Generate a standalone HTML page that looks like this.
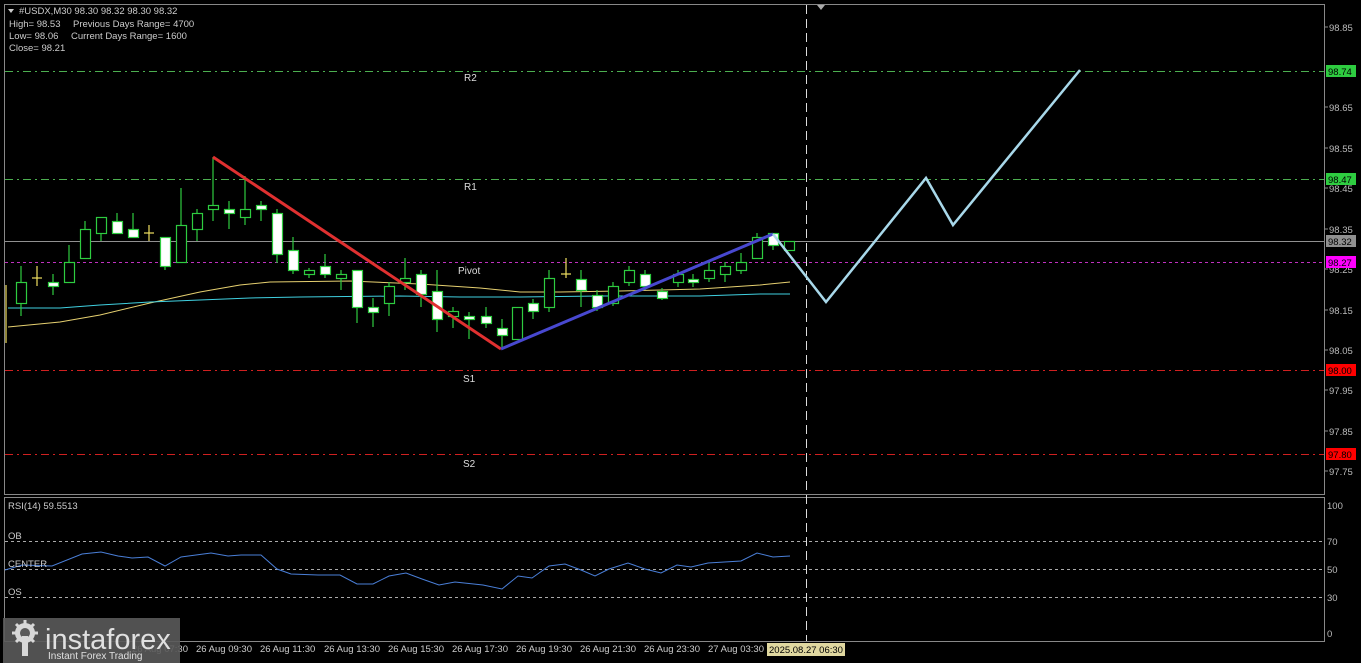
<!DOCTYPE html>
<html><head><meta charset="utf-8"><style>
html,body{margin:0;padding:0;background:#000;width:1361px;height:663px;overflow:hidden}
svg{display:block;font-family:"Liberation Sans",sans-serif}
</style></head><body>
<svg width="1361" height="663" viewBox="0 0 1361 663" xmlns="http://www.w3.org/2000/svg">
<rect width="1361" height="663" fill="#000"/>
<!-- frames -->
<rect x="4.5" y="4.5" width="1320" height="490" fill="none" stroke="#888" stroke-width="1"/>
<rect x="4.5" y="497.5" width="1320" height="144" fill="none" stroke="#888" stroke-width="1"/>
<!-- horizontal levels -->
<g stroke-width="1" fill="none">
<line x1="5" y1="71.5" x2="1324" y2="71.5" stroke="#4caf50" stroke-dasharray="8,4,2,4"/>
<line x1="5" y1="179.5" x2="1324" y2="179.5" stroke="#4caf50" stroke-dasharray="8,4,2,4"/>
<line x1="5" y1="241.5" x2="1324" y2="241.5" stroke="#909090"/>
<line x1="5" y1="262.5" x2="1324" y2="262.5" stroke="#c030c0" stroke-dasharray="3,3"/>
<line x1="5" y1="370.5" x2="1324" y2="370.5" stroke="#d02020" stroke-dasharray="8,4,2,4"/>
<line x1="5" y1="454.5" x2="1324" y2="454.5" stroke="#d02020" stroke-dasharray="8,4,2,4"/>
<line x1="5" y1="541.5" x2="1324" y2="541.5" stroke="#aaa" stroke-dasharray="3,3"/>
<line x1="5" y1="569.5" x2="1324" y2="569.5" stroke="#aaa" stroke-dasharray="3,3"/>
<line x1="5" y1="597.5" x2="1324" y2="597.5" stroke="#aaa" stroke-dasharray="3,3"/>
<line x1="806.5" y1="5" x2="806.5" y2="641" stroke="#ddd" stroke-dasharray="9,5"/>
</g>
<polygon points="817,5 825,5 821,10" fill="#aaa"/>
<!-- MAs -->
<polyline fill="none" stroke="#e6d070" stroke-width="1" points="8,327 60,322 100,315 150,303 200,292 240,285 270,282 350,281 420,284 480,288 520,292 560,292 620,291 700,289 760,285 790,282"/>
<polyline fill="none" stroke="#40d0e0" stroke-width="1" points="8,308 60,308 100,305 150,302 200,300 250,298 300,297 400,296 460,297 520,297 600,296 700,296 760,294 790,294"/>
<!-- candles -->
<g stroke="#2ecc40" stroke-width="1.2" id="c"></g>
<g stroke="#2ecc40" stroke-width="1.2">
<line x1="21" y1="266" x2="21" y2="316"/><rect x="16.5" y="282.5" width="10" height="21" fill="#000"/>
<line x1="53" y1="274" x2="53" y2="295"/><rect x="48.5" y="282.5" width="10" height="4" fill="#fff"/>
<line x1="69" y1="245" x2="69" y2="282"/><rect x="64.5" y="262.5" width="10" height="20" fill="#000"/>
<line x1="85" y1="221" x2="85" y2="258"/><rect x="80.5" y="229.5" width="10" height="29" fill="#000"/>
<line x1="101" y1="217" x2="101" y2="241"/><rect x="96.5" y="217.5" width="10" height="16" fill="#000"/>
<line x1="117" y1="213" x2="117" y2="233"/><rect x="112.5" y="221.5" width="10" height="12" fill="#fff"/>
<line x1="133" y1="213" x2="133" y2="237"/><rect x="128.5" y="229.5" width="10" height="8" fill="#fff"/>
<line x1="165" y1="237" x2="165" y2="270"/><rect x="160.5" y="237.5" width="10" height="29" fill="#fff"/>
<line x1="181" y1="188" x2="181" y2="262"/><rect x="176.5" y="225.5" width="10" height="37" fill="#000"/>
<line x1="197" y1="209" x2="197" y2="241"/><rect x="192.5" y="213.5" width="10" height="16" fill="#000"/>
<line x1="213" y1="157" x2="213" y2="221"/><rect x="208.5" y="205.5" width="10" height="4" fill="#000"/>
<line x1="229" y1="201" x2="229" y2="229"/><rect x="224.5" y="209.5" width="10" height="4" fill="#fff"/>
<line x1="245" y1="176" x2="245" y2="225"/><rect x="240.5" y="209.5" width="10" height="8" fill="#000"/>
<line x1="261" y1="201" x2="261" y2="221"/><rect x="256.5" y="205.5" width="10" height="4" fill="#fff"/>
<line x1="277" y1="209" x2="277" y2="263"/><rect x="272.5" y="213.5" width="10" height="41" fill="#fff"/>
<line x1="293" y1="237" x2="293" y2="274"/><rect x="288.5" y="250.5" width="10" height="20" fill="#fff"/>
<line x1="309" y1="268" x2="309" y2="278"/><rect x="304.5" y="270.5" width="10" height="4" fill="#000"/>
<line x1="325" y1="254" x2="325" y2="278"/><rect x="320.5" y="266.5" width="10" height="8" fill="#fff"/>
<line x1="341" y1="270" x2="341" y2="290"/><rect x="336.5" y="274.5" width="10" height="4" fill="#000"/>
<line x1="357" y1="270" x2="357" y2="323"/><rect x="352.5" y="270.5" width="10" height="37" fill="#fff"/>
<line x1="373" y1="298" x2="373" y2="327"/><rect x="368.5" y="307.5" width="10" height="5" fill="#fff"/>
<line x1="389" y1="282" x2="389" y2="316"/><rect x="384.5" y="286.5" width="10" height="17" fill="#000"/>
<line x1="405" y1="258" x2="405" y2="290"/><rect x="400.5" y="278.5" width="10" height="4" fill="#000"/>
<line x1="421" y1="270" x2="421" y2="307"/><rect x="416.5" y="274.5" width="10" height="20" fill="#fff"/>
<line x1="437" y1="270" x2="437" y2="332"/><rect x="432.5" y="291.5" width="10" height="28" fill="#fff"/>
<line x1="453" y1="307" x2="453" y2="328"/><rect x="448.5" y="311.5" width="10" height="5" fill="#000"/>
<line x1="469" y1="312" x2="469" y2="339"/><rect x="464.5" y="316.5" width="10" height="3" fill="#fff"/>
<line x1="486" y1="307" x2="486" y2="328"/><rect x="481.5" y="316.5" width="10" height="7" fill="#fff"/>
<line x1="502" y1="319" x2="502" y2="347"/><rect x="497.5" y="328.5" width="10" height="7" fill="#fff"/>
<line x1="517" y1="307" x2="517" y2="339"/><rect x="512.5" y="307.5" width="10" height="32" fill="#000"/>
<line x1="533" y1="299" x2="533" y2="319"/><rect x="528.5" y="303.5" width="10" height="8" fill="#fff"/>
<line x1="549" y1="270" x2="549" y2="312"/><rect x="544.5" y="278.5" width="10" height="29" fill="#000"/>
<line x1="581" y1="270" x2="581" y2="307"/><rect x="576.5" y="279.5" width="10" height="11" fill="#fff"/>
<line x1="597" y1="290" x2="597" y2="311"/><rect x="592.5" y="295.5" width="10" height="12" fill="#fff"/>
<line x1="613" y1="282" x2="613" y2="306"/><rect x="608.5" y="286.5" width="10" height="17" fill="#000"/>
<line x1="629" y1="266" x2="629" y2="286"/><rect x="624.5" y="270.5" width="10" height="12" fill="#000"/>
<line x1="645" y1="270" x2="645" y2="290"/><rect x="640.5" y="274.5" width="10" height="12" fill="#fff"/>
<line x1="662" y1="288" x2="662" y2="300"/><rect x="657.5" y="291.5" width="10" height="7" fill="#fff"/>
<line x1="678" y1="270" x2="678" y2="287"/><rect x="673.5" y="274.5" width="10" height="8" fill="#000"/>
<line x1="693" y1="274" x2="693" y2="287"/><rect x="688.5" y="279.5" width="10" height="3" fill="#fff"/>
<line x1="709" y1="262" x2="709" y2="282"/><rect x="704.5" y="270.5" width="10" height="8" fill="#000"/>
<line x1="725" y1="262" x2="725" y2="282"/><rect x="720.5" y="266.5" width="10" height="8" fill="#000"/>
<line x1="741" y1="253" x2="741" y2="274"/><rect x="736.5" y="262.5" width="10" height="8" fill="#000"/>
<line x1="757" y1="233" x2="757" y2="258"/><rect x="752.5" y="237.5" width="10" height="21" fill="#000"/>
<line x1="773" y1="233" x2="773" y2="250"/><rect x="768.5" y="233.5" width="10" height="12" fill="#fff"/>
<line x1="789" y1="241" x2="789" y2="250"/><rect x="784.5" y="241.5" width="10" height="9" fill="#000"/>
</g>
<g stroke="#f0e060" stroke-width="1.2">
<line x1="37" y1="266" x2="37" y2="286"/><line x1="32" y1="278" x2="42" y2="278"/>
<line x1="149" y1="225" x2="149" y2="241"/><line x1="144" y1="233" x2="154" y2="233"/>
<line x1="566" y1="258" x2="566" y2="278"/><line x1="561" y1="274" x2="571" y2="274"/>
<line x1="6" y1="285" x2="6" y2="343"/>
</g>
<!-- trend lines -->
<line x1="213" y1="157" x2="501" y2="349" stroke="#e03030" stroke-width="3"/>
<line x1="501" y1="349" x2="773" y2="234" stroke="#4848d0" stroke-width="3"/>
<polyline fill="none" stroke="#a8d8ea" stroke-width="2.5" points="773,234 826,302 926,178 953,225 1080,70"/>
<!-- RSI -->
<polyline fill="none" stroke="#4a7fd8" stroke-width="1" points="5,570 22,565 52,566 82,554 101,552 118,556 132,558 148,557 165,566 181,557 211,553 228,556 241,555 261,555 277,569 291,574 318,575 340,575 357,584 373,584 389,576 406,573 422,579 439,585 455,582 483,585 502,589 518,576 532,578 549,566 565,564 581,570 595,576 609,569 628,563 645,569 661,573 677,565 691,567 708,563 741,561 757,553 773,557 790,556"/>
<!-- level labels -->
<g fill="#ddd" font-size="10">
<text x="464" y="81">R2</text><text x="464" y="190">R1</text><text x="458" y="274">Pivot</text>
<text x="463" y="382">S1</text><text x="463" y="467">S2</text>
</g>
<!-- header -->
<g fill="#ccc" font-size="9.5">
<polygon points="8,9 14,9 11,13" fill="#ccc"/>
<text x="19" y="14">#USDX,M30  98.30 98.32 98.30 98.32</text>
<text x="9" y="27">High= 98.53</text><text x="73" y="27">Previous Days Range= 4700</text>
<text x="9" y="39">Low= 98.06</text><text x="71" y="39">Current Days Range= 1600</text>
<text x="9" y="51">Close= 98.21</text>
<text x="8" y="509">RSI(14) 59.5513</text>
<text x="8" y="539">OB</text><text x="8" y="567">CENTER</text><text x="8" y="595">OS</text>
</g>
<!-- right axis -->
<g fill="#bbb" font-size="9.5">
<g stroke="#888"><line x1="1324" y1="27" x2="1328" y2="27"/><line x1="1324" y1="107" x2="1328" y2="107"/><line x1="1324" y1="148" x2="1328" y2="148"/><line x1="1324" y1="188" x2="1328" y2="188"/><line x1="1324" y1="229" x2="1328" y2="229"/><line x1="1324" y1="269" x2="1328" y2="269"/><line x1="1324" y1="310" x2="1328" y2="310"/><line x1="1324" y1="350" x2="1328" y2="350"/><line x1="1324" y1="390" x2="1328" y2="390"/><line x1="1324" y1="431" x2="1328" y2="431"/><line x1="1324" y1="471" x2="1328" y2="471"/></g>
<text x="1329" y="31">98.85</text><text x="1329" y="111">98.65</text><text x="1329" y="152">98.55</text><text x="1329" y="192">98.45</text><text x="1329" y="233">98.35</text><text x="1329" y="273">98.25</text><text x="1329" y="314">98.15</text><text x="1329" y="354">98.05</text><text x="1329" y="394">97.95</text><text x="1329" y="435">97.85</text><text x="1329" y="475">97.75</text>
<text x="1327" y="509">100</text><text x="1327" y="545">70</text><text x="1327" y="573">50</text><text x="1327" y="601">30</text><text x="1327" y="637">0</text>
<rect x="1326" y="65" width="30" height="12" fill="#2ecc40"/><text x="1328" y="75" fill="#000">98.74</text>
<rect x="1326" y="173" width="30" height="12" fill="#2ecc40"/><text x="1328" y="183" fill="#000">98.47</text>
<rect x="1326" y="235" width="30" height="12" fill="#909090"/><text x="1328" y="245" fill="#000">98.32</text>
<rect x="1326" y="256" width="30" height="12" fill="#ff00ff"/><text x="1328" y="266" fill="#000">98.27</text>
<rect x="1326" y="364" width="30" height="12" fill="#ff0000"/><text x="1328" y="374" fill="#000">98.00</text>
<rect x="1326" y="448" width="30" height="12" fill="#ff0000"/><text x="1328" y="458" fill="#000">97.80</text>
</g>
<!-- time axis -->
<g fill="#ccc" font-size="9.5">
<text x="196" y="652">26 Aug 09:30</text><text x="260" y="652">26 Aug 11:30</text><text x="324" y="652">26 Aug 13:30</text><text x="388" y="652">26 Aug 15:30</text><text x="452" y="652">26 Aug 17:30</text><text x="516" y="652">26 Aug 19:30</text><text x="580" y="652">26 Aug 21:30</text><text x="644" y="652">26 Aug 23:30</text><text x="708" y="652">27 Aug 03:30</text>
<text x="132" y="652">26 Aug 07:30</text>
<rect x="767" y="643" width="78" height="13" fill="#e0d8a0"/><text x="769" y="653" fill="#000">2025.08.27 06:30</text>
</g>
<!-- logo -->
<rect x="3" y="618" width="177" height="45" fill="#5a5a5a" opacity="0.9"/>
<g fill="#d8d8d8">
<circle cx="25" cy="633" r="10"/>
<g stroke="#d8d8d8" stroke-width="3"><line x1="25" y1="620" x2="25" y2="646"/><line x1="12" y1="633" x2="38" y2="633"/><line x1="16" y1="624" x2="34" y2="642"/><line x1="34" y1="624" x2="16" y2="642"/></g>
<circle cx="25" cy="633" r="5" fill="#5a5a5a"/>
<rect x="22" y="636" width="6" height="20" fill="#d8d8d8"/>
<text x="45" y="649" font-size="29" fill="#e0e0e0">instaforex</text>
<text x="48" y="659" font-size="10" fill="#e0e0e0">Instant Forex Trading</text>
</g>
</svg>
</body></html>
